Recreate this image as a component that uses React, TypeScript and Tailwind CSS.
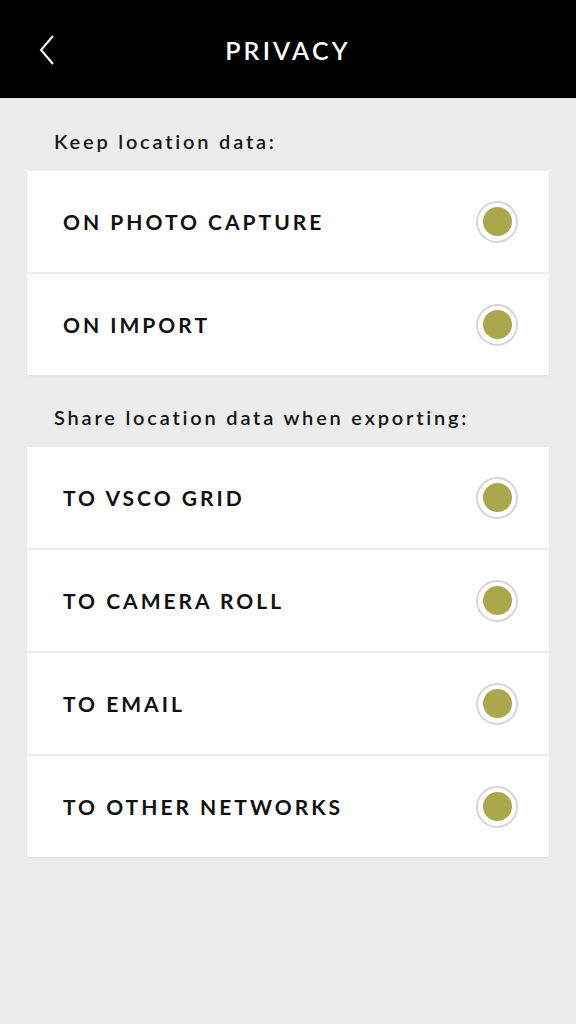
import React from "react";

const Toggle = () => (
  <div className="w-[42px] h-[42px] rounded-full border-2 border-[#d6d6d6] bg-white flex items-center justify-center">
    <div className="w-[29px] h-[29px] rounded-full bg-[#aaa84a]" />
  </div>
);

const Row = ({ label }: { label: string }) => (
  <div className="h-[101px] bg-white flex items-center justify-between pl-[36px] pr-[31px]">
    <span className="text-[21px] font-bold tracking-[3px] text-[#111]">{label}</span>
    <Toggle />
  </div>
);

const Section = ({ title, items }: { title: string; items: string[] }) => (
  <div>
    <div className="pl-[54px] h-[72px] pt-[12px] flex items-center text-[20px] font-semibold tracking-[2.8px] text-[#161616]">
      {title}
    </div>
    <div className="mx-[27px] flex flex-col gap-[2px] shadow-[0_1px_2px_rgba(0,0,0,0.05)]">
      {items.map((i) => (
        <Row key={i} label={i} />
      ))}
    </div>
  </div>
);

export default function App() {
  return (
    <div
      className="w-[576px] h-[1024px] bg-[#ececec] flex flex-col"
      style={{ fontFamily: "Lato, 'Open Sans', sans-serif" }}
    >
      <div className="h-[99px] shrink-0 bg-black relative flex items-center justify-center border-b border-[#e2e2e2]">
        <svg className="absolute left-[38px] top-[34px]" width="18" height="32" viewBox="0 0 18 32">
          <path d="M15 2 L3 16 L15 30" stroke="white" strokeWidth="2" fill="none" />
        </svg>
        <span className="text-white text-[25px] font-semibold tracking-[3.2px] mt-[4px]">PRIVACY</span>
      </div>
      <Section title="Keep location data:" items={["ON PHOTO CAPTURE", "ON IMPORT"]} />
      <Section
        title="Share location data when exporting:"
        items={["TO VSCO GRID", "TO CAMERA ROLL", "TO EMAIL", "TO OTHER NETWORKS"]}
      />
    </div>
  );
}
